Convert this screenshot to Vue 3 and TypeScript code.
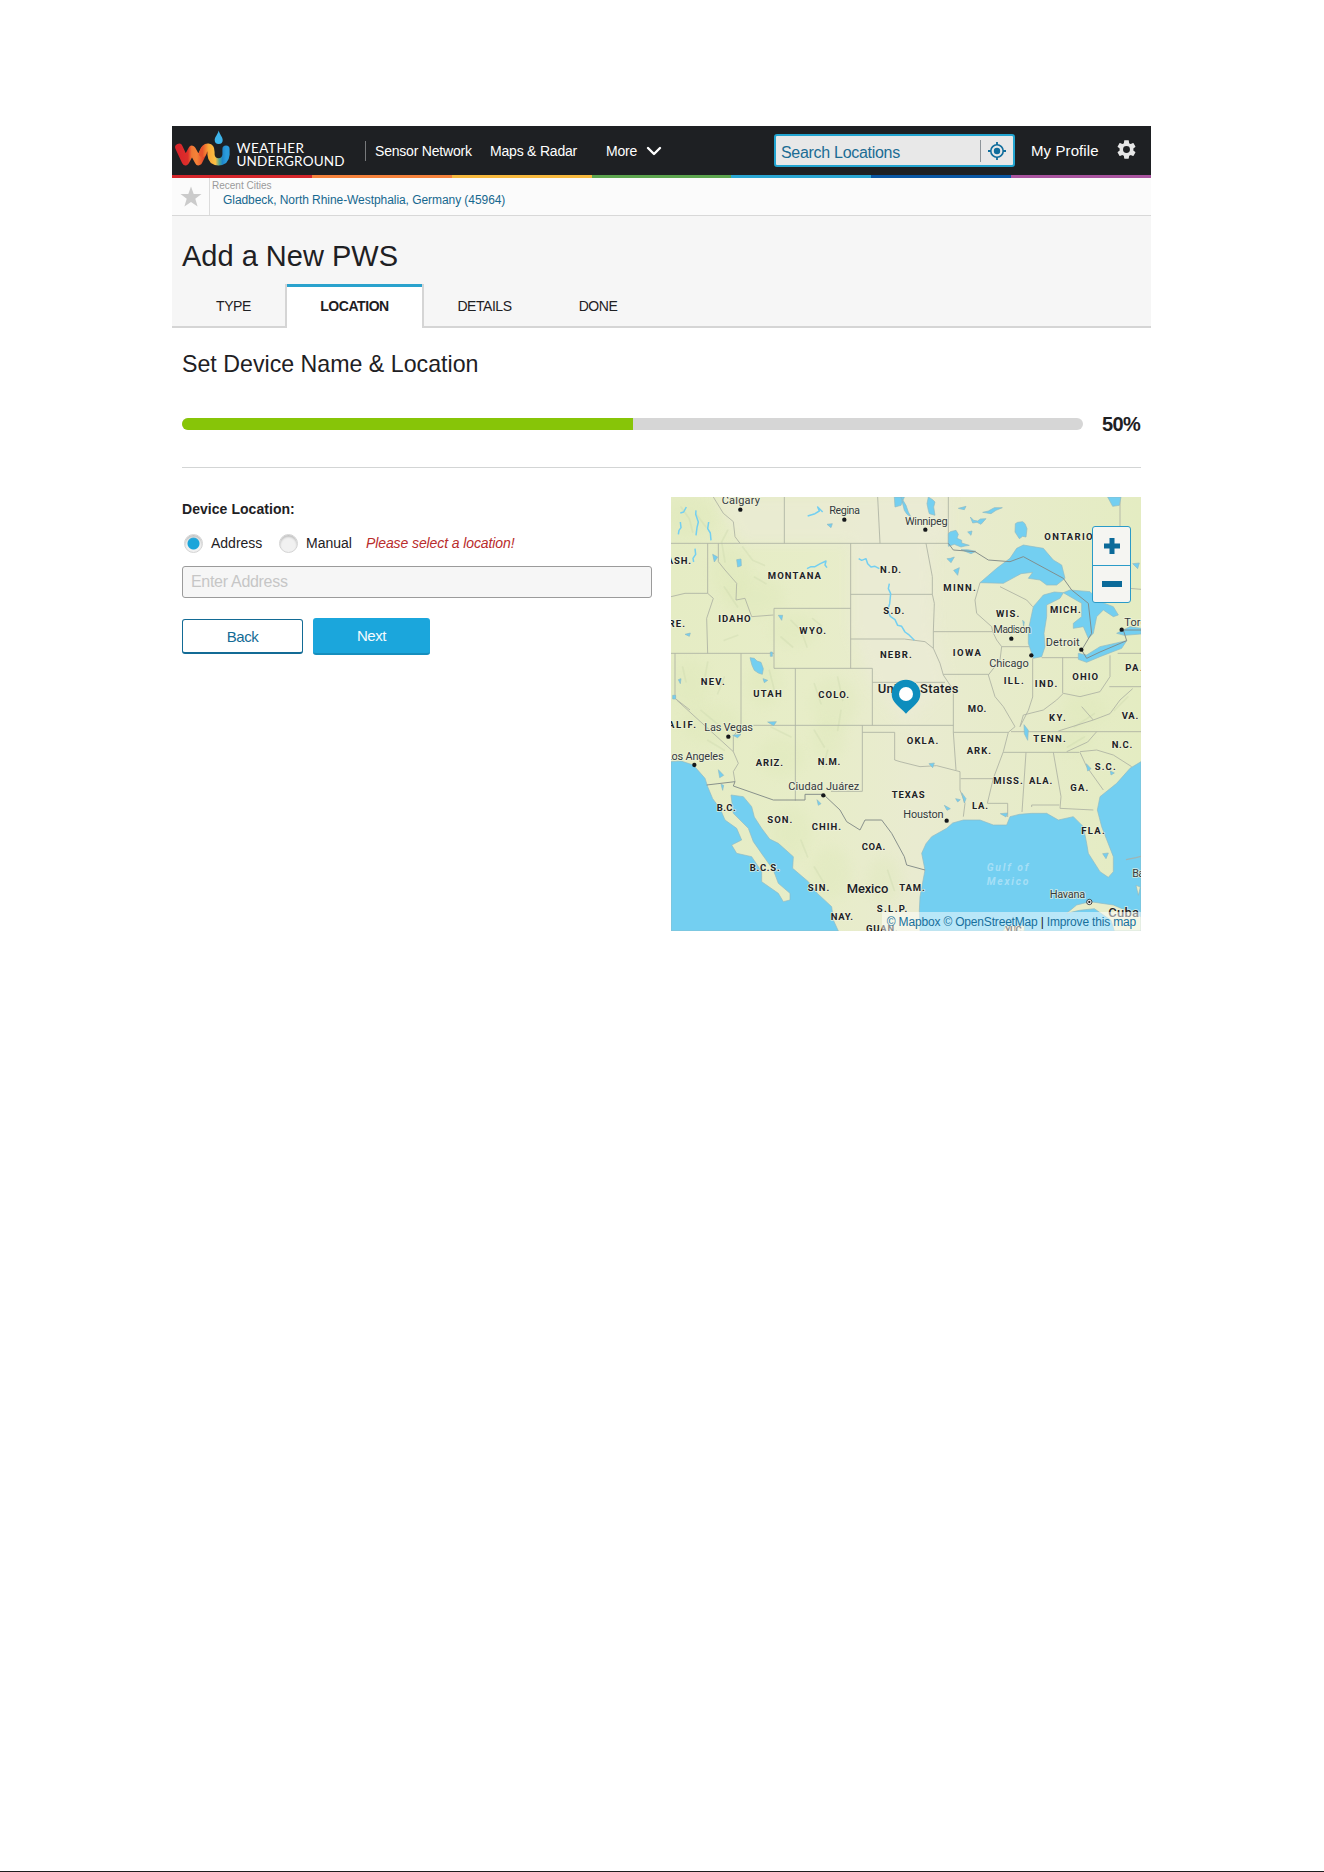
<script setup lang="ts">
import { ref } from 'vue'

interface MapLabel {
  text: string
  x: number
  y: number
  w: number
  kind?: 'city' | 'country' | 'sea'
}

const progress = 50
const mode = ref<'address' | 'manual'>('address')
const address = ref('')
const search = ref('')

const tabs = [
  { id: 'type', label: 'TYPE' },
  { id: 'location', label: 'LOCATION' },
  { id: 'details', label: 'DETAILS' },
  { id: 'done', label: 'DONE' },
]

const stripes = ['#d5262c', '#f5823c', '#f7b93e', '#5da54f', '#2aa6d2', '#0a57a4', '#a9549f']

// Map units: three per screen pixel
const labels: MapLabel[] = [
  { text: 'ASH.', x: -13, y: 200, w: 73 },
  { text: 'MONTANA', x: 290, y: 246, w: 160 },
  { text: 'IDAHO', x: 142, y: 374, w: 97 },
  { text: 'ORE.', x: -31, y: 389, w: 73 },
  { text: 'WYO.', x: 385, y: 411, w: 80 },
  { text: 'N.D.', x: 627, y: 227, w: 63 },
  { text: 'S.D.', x: 637, y: 350, w: 63 },
  { text: 'NEBR.', x: 627, y: 484, w: 95 },
  { text: 'NEV.', x: 89, y: 563, w: 72 },
  { text: 'UTAH', x: 247, y: 601, w: 85 },
  { text: 'COLO.', x: 442, y: 603, w: 92 },
  { text: 'ONTARIO', x: 1120, y: 129, w: 145 },
  { text: 'MINN.', x: 817, y: 282, w: 97 },
  { text: 'WIS.', x: 975, y: 359, w: 70 },
  { text: 'MICH.', x: 1137, y: 348, w: 92 },
  { text: 'IOWA', x: 845, y: 476, w: 85 },
  { text: 'ILL.', x: 998, y: 561, w: 60 },
  { text: 'IND.', x: 1091, y: 571, w: 68 },
  { text: 'OHIO', x: 1204, y: 549, w: 77 },
  { text: 'PA.', x: 1363, y: 521, w: 52 },
  { text: 'MO.', x: 890, y: 644, w: 56 },
  { text: 'KY.', x: 1134, y: 671, w: 50 },
  { text: 'VA.', x: 1352, y: 665, w: 50 },
  { text: 'TENN.', x: 1087, y: 735, w: 97 },
  { text: 'N.C.', x: 1322, y: 753, w: 62 },
  { text: 'OKLA.', x: 707, y: 740, w: 95 },
  { text: 'ARK.', x: 887, y: 772, w: 73 },
  { text: 'S.C.', x: 1271, y: 819, w: 63 },
  { text: 'MISS.', x: 967, y: 862, w: 88 },
  { text: 'ALA.', x: 1074, y: 862, w: 70 },
  { text: 'GA.', x: 1198, y: 882, w: 54 },
  { text: 'TEXAS', x: 662, y: 902, w: 99 },
  { text: 'LA.', x: 903, y: 936, w: 48 },
  { text: 'FLA.', x: 1231, y: 1011, w: 70 },
  { text: 'CALIF.', x: -33, y: 692, w: 108 },
  { text: 'ARIZ.', x: 254, y: 807, w: 82 },
  { text: 'N.M.', x: 440, y: 803, w: 68 },
  { text: 'B.C.', x: 137, y: 941, w: 57 },
  { text: 'SON.', x: 289, y: 979, w: 75 },
  { text: 'CHIH.', x: 422, y: 999, w: 88 },
  { text: 'COA.', x: 572, y: 1058, w: 71 },
  { text: 'B.C.S.', x: 236, y: 1121, w: 90 },
  { text: 'SIN.', x: 410, y: 1181, w: 65 },
  { text: 'TAM.', x: 685, y: 1181, w: 76 },
  { text: 'NAY.', x: 479, y: 1269, w: 67 },
  { text: 'S.L.P.', x: 617, y: 1246, w: 92 },
  { text: 'GUAN.', x: 585, y: 1305, w: 95 },
  { text: 'YUC.', x: 1002, y: 1308, w: 57 },
  { text: 'Calgary', x: 152, y: 21, w: 115, kind: 'city' },
  { text: 'Regina', x: 475, y: 52, w: 92, kind: 'city' },
  { text: 'Winnipeg', x: 702, y: 83, w: 128, kind: 'city' },
  { text: 'Madison', x: 967, y: 409, w: 113, kind: 'city' },
  { text: 'Detroit', x: 1124, y: 446, w: 102, kind: 'city' },
  { text: 'Toronto', x: 1360, y: 387, w: 115, kind: 'city' },
  { text: 'Chicago', x: 955, y: 509, w: 118, kind: 'city' },
  { text: 'Las Vegas', x: 100, y: 703, w: 146, kind: 'city' },
  { text: 'Los Angeles', x: -16, y: 789, w: 174, kind: 'city' },
  { text: 'Ciudad Juárez', x: 352, y: 878, w: 213, kind: 'city' },
  { text: 'Houston', x: 697, y: 962, w: 121, kind: 'city' },
  { text: 'Havana', x: 1136, y: 1203, w: 107, kind: 'city' },
  { text: 'Bahamas', x: 1384, y: 1139, w: 120, kind: 'city' },
  { text: 'United States', x: 620, y: 587, w: 242, kind: 'country' },
  { text: 'Mexico', x: 527, y: 1187, w: 125, kind: 'country' },
  { text: 'Cuba', x: 1312, y: 1259, w: 92, kind: 'country' },
  { text: 'Gulf of', x: 947, y: 1121, w: 125, kind: 'sea' },
  { text: 'Mexico', x: 947, y: 1164, w: 125, kind: 'sea' },
]

const cities = [
  [208, 38], [520, 68], [763, 98], [1021, 425], [1081, 475], [1231, 458],
  [1352, 398], [172, 719], [70, 804], [457, 895], [827, 971],
]

const relief = [
  [60, 60, 80, 60], [180, 230, 60, 80], [250, 300, 90, 60], [370, 400, 70, 50],
  [60, 560, 60, 70], [280, 560, 50, 70], [490, 620, 70, 80], [120, 680, 90, 60],
  [330, 780, 70, 60], [470, 730, 50, 60], [360, 1010, 60, 80], [480, 1130, 60, 80],
  [640, 1150, 50, 70], [1240, 640, 70, 50], [1200, 730, 70, 40],
]
</script>

<template>
  <div class="page">
    <div class="site">
      <header class="topbar">
        <svg class="logo" viewBox="0 0 183 49" role="img" aria-label="Weather Underground">
          <defs>
            <linearGradient id="logo-w" x1="0" x2="1">
              <stop offset="0" stop-color="#d9252b" />
              <stop offset="0.35" stop-color="#dd2f2a" />
              <stop offset="0.5" stop-color="#f07a35" />
              <stop offset="0.7" stop-color="#f58238" />
              <stop offset="1" stop-color="#e2402a" />
            </linearGradient>
            <linearGradient id="logo-u" x1="0" x2="1">
              <stop offset="0" stop-color="#e8532c" />
              <stop offset="0.25" stop-color="#f9a636" />
              <stop offset="0.55" stop-color="#fbc044" />
              <stop offset="0.72" stop-color="#4aa79a" />
              <stop offset="0.85" stop-color="#1f86c9" />
              <stop offset="1" stop-color="#2a9bdc" />
            </linearGradient>
          </defs>
          <path d="M7 21.500 13.500 35.500 20 23.500 26.500 35.500 32.500 23.500" fill="none" stroke="url(#logo-w)" stroke-width="7.600" stroke-linecap="round" stroke-linejoin="round" />
          <path d="M30.500 27.500C32 22.500 34 21 36.200 21.200Q39 21.500 39 26V28.500Q39.500 35.500 46.500 35.800Q53.500 35.500 54 28.500V23" fill="none" stroke="url(#logo-u)" stroke-width="7.200" stroke-linecap="round" />
          <path d="M46.700 4.500C47.700 8.500 50.700 11 50.700 14A4 4 0 0 1 42.700 14C42.700 11 45.700 8.500 46.700 4.500Z" fill="#3db4ea" />
          <text x="64.500" y="26.600" textLength="67.500" class="logo__text">WEATHER</text>
          <text x="64.500" y="39.600" textLength="108" class="logo__text">UNDERGROUND</text>
        </svg>
        <nav class="nav">
          <a class="nav__link">Sensor Network</a>
          <a class="nav__link">Maps &amp; Radar</a>
          <a class="nav__link nav__link--more">
            More
            <svg width="16" height="10" viewBox="0 0 16 10"><path d="M2 2 8 8 14 2" fill="none" stroke="#fff" stroke-width="2.400" stroke-linecap="round" stroke-linejoin="round" /></svg>
          </a>
        </nav>
        <div class="search">
          <input v-model="search" class="search__input" placeholder="Search Locations" aria-label="Search Locations">
          <span class="search__locate">
            <svg width="20" height="20" viewBox="0 0 20 20">
              <circle cx="10" cy="10" r="6.200" fill="none" stroke="#0f6d9c" stroke-width="1.600" />
              <circle cx="10" cy="10" r="3.200" fill="#0f6d9c" />
              <path d="M10 1V4M10 16V19M1 10H4M16 10H19" stroke="#0f6d9c" stroke-width="1.800" />
            </svg>
          </span>
        </div>
        <a class="profile">My Profile</a>
        <svg class="gear" width="23" height="23" viewBox="0 0 24 24">
          <path fill="#e6e6e6" d="M19.140 12.940c.04-.3.060-.61.060-.94 0-.32-.02-.64-.07-.94l2.030-1.580c.18-.14.230-.41.120-.61l-1.920-3.320c-.12-.22-.37-.29-.59-.22l-2.390.96c-.5-.38-1.030-.7-1.620-.94L14.400 2.810c-.04-.24-.24-.41-.48-.41h-3.840c-.24 0-.43.17-.47.41L9.250 5.350C8.660 5.590 8.120 5.920 7.630 6.290L5.240 5.330c-.22-.08-.47 0-.59.22L2.740 8.870c-.12.21-.08.47.12.61l2.030 1.580c-.05.3-.09.63-.09.94s.02.640.07.940l-2.030 1.580c-.18.14-.23.41-.12.61l1.920 3.320c.12.220.37.290.59.220l2.390-.96c.5.380 1.030.700 1.620.940l.36 2.540c.05.240.240.410.480.410h3.840c.24 0 .440-.17.470-.41l.36-2.540c.59-.24 1.130-.56 1.620-.94l2.390.96c.22.080.470 0 .590-.22l1.920-3.320c.12-.22.070-.47-.12-.61l-2.010-1.580zM12 15.600A3.600 3.600 0 1 1 12 8.400a3.600 3.600 0 0 1 0 7.200z" />
        </svg>
      </header>
      <div class="stripes">
        <i v-for="color in stripes" :key="color" :style="{ background: color }" />
      </div>

      <div class="recent">
        <div class="recent__star">
          <svg width="22" height="22" viewBox="0 0 22 22"><path fill="#cbcbcb" d="M11 .500 13.700 8H21.500L15.300 12.700 17.600 20.500 11 15.900 4.400 20.500 6.700 12.700.500 8H8.300Z" /></svg>
        </div>
        <div class="recent__body">
          <span class="recent__title">Recent Cities</span>
          <a class="recent__city">Gladbeck, North Rhine-Westphalia, Germany (45964)</a>
        </div>
      </div>

      <section class="heading">
        <h1>Add a New PWS</h1>
        <div class="tabs" role="tablist">
          <span
            v-for="tab in tabs"
            :key="tab.id"
            class="tab"
            :class="[`tab--${tab.id}`, { 'tab--active': tab.id === 'location' }]"
            role="tab"
          >{{ tab.label }}</span>
        </div>
      </section>

      <main class="content">
        <h2>Set Device Name &amp; Location</h2>
        <div class="progress">
          <div class="progress__track">
            <div class="progress__fill" :style="{ width: `${progress}%` }" />
          </div>
          <strong>{{ progress }}%</strong>
        </div>
        <hr>

        <div class="columns">
          <form class="form" @submit.prevent>
            <strong class="form__label">Device Location:</strong>
            <div class="form__modes">
              <label class="radio">
                <input v-model="mode" type="radio" value="address"><span>Address</span>
              </label>
              <label class="radio">
                <input v-model="mode" type="radio" value="manual"><span>Manual</span>
              </label>
              <em>Please select a location!</em>
            </div>
            <input v-model="address" class="form__address" placeholder="Enter Address">
            <div class="form__actions">
              <button class="btn btn--back" type="button">Back</button>
              <button class="btn btn--next" type="button">Next</button>
            </div>
          </form>

          <div class="map">
            <svg class="map__canvas" viewBox="0 0 1410 1302">
              <defs>
                <linearGradient id="land" x1="0" x2="1">
                  <stop offset="0" stop-color="#e5ecc4" />
                  <stop offset="0.3" stop-color="#e7edc8" />
                  <stop offset="0.52" stop-color="#e9ebd0" />
                  <stop offset="1" stop-color="#e4ecc2" />
                </linearGradient>
                <filter id="soft" x="-40%" y="-40%" width="180%" height="180%"><feGaussianBlur stdDeviation="18" /></filter>
              </defs>
              <rect width="1410" height="1302" fill="url(#land)" />
              <path d="M130 0H832V139H210ZM540 139H780L790 400 830 560 700 680 600 560 540 400Z" fill="#ebebd6" opacity="0.7" filter="url(#soft)" />
              <ellipse v-for="(r, i) in relief" :key="i" :cx="r[0]" :cy="r[1]" :rx="r[2]" :ry="r[3]" fill="#dce7b6" opacity="0.3" filter="url(#soft)" />

              <g class="map__relief">
                <path d="M30 30l25 35 10 40M75 50l30 40M170 100l-18 35 10 60M215 150l30 40 35 15M160 270l40 60M250 240l35 20M360 370l30 30 18 50M330 420l35 30M425 365l25 20-10 30M160 430l40-15M35 510l10 45M110 495l-8 45M140 590l20-50M295 520l15 60M430 560l20 60M500 540l15 70M510 640l-10 60M90 640l60 50M110 730l50 30M300 690l60 30M430 700l30 50M470 760l-14 50M390 1030l20 50M430 1110l30 50M650 1120l20 60M1210 690l60-40M1190 750l50-30M1330 640l40-40" />
              </g>

              <g class="map__borders">
                <path d="M0 139H832M340 0V139M620 0 627 139M832 0V139M127 0 157 49 187 74 192 119 207 139" />
                <path d="M110 139V289L127 304 107 364 110 469M0 299 42 289H110M142 139V194L162 219 197 259 195 309 222 304 242 359 307 354M309 514V334H539M539 139V514M309 514H604M0 469H309" />
                <path d="M12 469V604L57 639M17 609 187 764 202 799 187 824 192 854M210 469V685L187 719V764M373 514V911M247 685H847M539 292H784M539 426H700L762 434 787 454M604 514V685M604 556H822" />
                <path d="M765 139 784 239V292L790 319 787 404V454L807 499 817 534 847 579V706L855 819M787 404H963M817 532H953" />
                <path d="M927 257 912 309 917 349 962 389 965 404 977 429 992 449 987 489 952 534 972 599 997 629 1032 689 1012 706 997 764 967 844 949 919H1010V960" />
                <path d="M992 449H1075M1085 484V600L1072 640 1047 689M1047 689 1057 654 1117 639 1157 609 1177 589 1227 599 1287 584 1317 539V475M1175 482V589M1112 482H1222M1315 569H1410M1340 469H1410M987 269 1067 309 1085 329M1347 0V90M1330 270 1410 277" />
                <path d="M574 685V883H480M574 706H671V789L687 794 747 809 797 806 867 824V879L882 919 877 959M869 845H967M847 706H1012M1020 704H1410M997 766H1225M1065 766 1053 945M1147 766 1170 899 1167 934 1267 939M1082 930V924H1165M1227 766 1247 809 1297 879M1227 764 1277 759 1327 774 1382 809M1277 704 1250 735 1187 764M1162 702 1267 669 1232 629M1267 669 1317 650 1347 609 1385 575" />
              </g>

              <g class="map__water">
                <path d="M0 794 30 792 67 804 102 844 110 869 125 905 147 934 162 969 197 994 212 1029 182 1044 197 1069 242 1079 272 1124V1154L322 1189 337 1214 357 1209V1189L322 1159 307 1119 282 1084 247 1034 232 994 187 949 180 894 217 899 242 929 250 960 272 994 296 1026 322 1039 367 1079 365 1114 412 1154 440 1190 482 1229 487 1269 502 1302H0Z" />
                <path d="M747 1302 745 1240 747 1199 762 1119 752 1069 765 1040 782 1019 827 994 845 978 877 969 927 969 967 984 1007 984 1017 959 1045 952 1082 949 1127 949 1162 969 1207 959 1237 989 1247 1039 1252 1069 1287 1124 1312 1141 1327 1124V1079L1292 989 1279 939 1287 899 1337 859 1377 814 1410 794V1302Z" />
                <path d="M927 257 977 214 1017 184 1037 154 1057 144 1117 154 1147 189 1172 204 1182 244 1157 264 1127 264 1107 249 1072 244 1085 226 1050 230 997 259Z" />
                <path d="M1072 399 1087 329 1117 294 1150 285 1177 287 1167 304 1127 324V359L1119 409 1122 449 1112 479 1087 484 1072 439Z" />
                <path d="M1177 287 1197 279 1257 284 1287 314 1327 329 1342 354 1327 359 1297 339 1277 359 1267 409 1252 424 1237 389 1207 394V379L1232 359V319Z" />
                <path d="M1222 469 1247 474 1287 449 1367 431 1352 454 1287 479 1247 496 1222 487ZM1337 409 1377 389 1410 394V411L1360 415Z" />
                <path d="M832 110 838 104 855 100 862 112 858 124 872 130 872 138 895 145 882 147 870 150 850 142 832 148ZM1033 80 1040 76 1055 74 1062 80 1068 95 1065 120 1055 118 1045 125 1032 105ZM898 60 908 70 920 72 928 66 945 65 930 82 918 76 905 78ZM862 34 885 28 880 38 870 36ZM935 46 952 42 970 32 994 32 975 40 960 50ZM772 0 785 8 792 15 788 30 792 55 775 50 772 40 768 20ZM690 0 705 25 712 45 720 60 708 52 700 40ZM670 0H700L690 25 672 30ZM828 185 838 184 850 180 840 197ZM848 220 865 212 860 235ZM890 105 903 102 900 115ZM1385 200 1405 198 1400 215ZM1310 0H1350L1345 25 1325 28ZM870 158 890 158 915 163 900 170Z" />
                <path d="M237 482 250 484 258 492 270 496 277 515 274 532 262 528 250 520 243 505ZM276 545 290 550 280 557ZM197 188 210 186 211 206 200 210ZM125 172 140 180 130 195ZM322 355 335 355 332 370ZM298 465 304 465V478H298ZM42 412 58 408 55 418ZM468 82 484 80 480 92ZM22 548 30 545 28 560ZM5 595 14 595V606H5ZM290 675 316 674 308 686ZM185 715 210 712 200 722ZM142 818 158 835 146 842ZM150 862 158 865 155 880ZM438 908 450 920 442 925ZM774 800 790 798 785 812ZM1059 683 1072 700 1070 730 1060 710ZM872 887 885 905 880 918ZM820 925 838 935 828 940ZM854 905 868 908 860 915ZM988 950 1010 948 1005 960ZM1246 800 1260 815 1250 822ZM1318 822 1330 828 1320 834ZM1295 1070 1312 1068 1305 1085ZM1055 370 1060 375 1058 388Z" />
                <path class="map__river" d="M46 30 38 45 28 48M28 75 30 92 24 100 22 112M75 40 74 52 82 75 78 92 75 115M113 75 110 95 118 108 120 130M72 155 74 172 66 184 68 195M408 215 420 209 432 209 448 200 465 192 462 204 468 212M410 57 432 50 445 42 440 30 455 45M563 185 572 190 585 185 590 200 600 210 612 208 625 215M655 260 652 275 659 290 656 320 650 340 658 358 672 368 680 385 692 388 702 405 712 412 730 430" />
              </g>
              <path d="M1187 1249 1217 1224 1257 1214 1327 1224 1410 1259V1302H1330L1320 1270 1270 1235 1225 1240ZM995 1302 1005 1290 1060 1284V1302ZM1395 1165 1408 1170 1402 1195Z" class="map__island" />
              <path class="map__coast" d="M1365 1088 1395 1082 1410 1078" />
              <path class="map__frontier" d="M832 139 847 159 912 164 952 189 1017 194 1057 179 1177 244 1202 279 1252 319 1262 409 1232 459 1247 484 1287 465 1367 431 1357 399H1410M107 864 192 854 187 867 307 909H402V892H457L507 939 527 974 567 999 582 969H632L662 1009 700 1079 707 1104 762 1119" />

              <g>
                <circle v-for="(c, i) in cities" :key="i" :cx="c[0]" :cy="c[1]" r="6.500" fill="#15171a" />
                <circle cx="1255" cy="1215" r="8" fill="#fff" stroke="#222" stroke-width="2.500" />
                <circle cx="1255" cy="1215" r="3.500" fill="#222" />
              </g>
              <text
                v-for="(l, i) in labels"
                :key="i"
                :x="l.x"
                :y="l.y"
                :textLength="l.w"
                class="map__label"
                :class="l.kind ? `map__label--${l.kind}` : 'map__label--state'"
              >{{ l.text }}</text>

              <path fill="#0d8dbd" d="M705 548A43 43 0 0 1 748 591C748 617 725 628 705 650 685 628 662 617 662 591A43 43 0 0 1 705 548Z" />
              <circle cx="705" cy="591" r="21" fill="#fff" />
            </svg>
            <div class="zoom">
              <button type="button" aria-label="Zoom in"><svg width="16" height="16" viewBox="0 0 16 16"><path d="M8 0V16M0 8H16" stroke="#0b6a99" stroke-width="5" /></svg></button>
              <button type="button" aria-label="Zoom out"><svg width="20" height="16" viewBox="0 0 20 16"><path d="M0 8H20" stroke="#0b6a99" stroke-width="6" /></svg></button>
            </div>
            <div class="credit"><a>© Mapbox</a> <a>© OpenStreetMap</a> | <a>Improve this map</a></div>
          </div>
        </div>
      </main>
    </div>
  </div>
</template>

<style>
body {
  margin: 0;
  background: #fff;
}
</style>

<style scoped>
* {
  box-sizing: border-box;
}

.page {
  display: flex;
  justify-content: center;
  align-items: flex-start;
  width: 1324px;
  height: 1872px;
  padding: 126px 1px 0 0;
  border-bottom: 1px solid #1e1e1e;
  color: #1e2023;
  font-family: 'Liberation Sans', Arial, sans-serif;
  font-size: 14px;
}

.site {
  width: 979px;
}

.topbar {
  display: flex;
  align-items: center;
  height: 49px;
  background: #1e2023;
  color: #fff;
}

.logo {
  flex: none;
  width: 183px;
  height: 49px;
}

.logo__text {
  fill: #fff;
  font-family: Lato, sans-serif;
  font-size: 13.5px;
}

.nav {
  display: flex;
  align-items: center;
  height: 20px;
  margin-left: 10px;
  padding-left: 9px;
  border-left: 1px solid #77797b;
}

.nav__link {
  width: 115px;
  letter-spacing: -0.2px;
  white-space: nowrap;
}

.nav__link--more {
  display: flex;
  align-items: center;
  gap: 9px;
  width: 168px;
  padding-left: 1px;
}

.search {
  display: flex;
  align-items: center;
  width: 241px;
  height: 33px;
  margin-left: 1px;
  border: 2px solid #22a4d0;
  border-radius: 3px;
  background: #e8e8e8;
}

.search__input {
  flex: 1;
  min-width: 0;
  padding: 4px 0 0 5px;
  border: 0;
  background: none;
  font: 16px 'Liberation Sans', Arial, sans-serif;
  letter-spacing: -0.3px;
}

.search__input::placeholder {
  color: #1b6c94;
}

.search__locate {
  display: grid;
  width: 33px;
  height: 22px;
  place-items: center;
  border-left: 1px solid #8d9499;
}

.profile {
  width: 86px;
  margin-left: 16px;
  font-size: 15px;
  letter-spacing: 0.1px;
}

.gear {
  margin: -2px 0 0 -2px;
}

.stripes {
  display: flex;
  height: 3px;
}

.stripes i {
  flex: 1;
}

.recent {
  display: flex;
  height: 38px;
  border-bottom: 1px solid #d8d8d8;
  background: #fbfbfb;
}

.recent__star {
  display: grid;
  width: 38px;
  place-items: center;
  border-right: 1px solid #dcdcdc;
}

.recent__body {
  display: flex;
  flex-direction: column;
  padding: 1px 0 0 2px;
}

.recent__title {
  color: #9a9a9a;
  font-size: 10px;
  line-height: 14px;
}

.recent__city {
  margin-left: 11px;
  color: #17688f;
  font-size: 12px;
  letter-spacing: -0.06px;
  line-height: 15px;
}

.heading {
  height: 112px;
  padding-top: 22px;
  background: #f6f6f6;
}

h1 {
  margin: 0 0 10px 10px;
  font-size: 29px;
  font-weight: 400;
  line-height: 36px;
}

.tabs {
  display: flex;
  height: 44px;
  border-bottom: 2px solid #d5d5d5;
}

.tab {
  height: 44px;
  font-size: 14px;
  letter-spacing: -0.45px;
  line-height: 44px;
  text-align: center;
}

.tab--type {
  width: 113px;
  padding-left: 10px;
}

.tab--location {
  width: 139px;
}

.tab--details {
  width: 121px;
}

.tab--done {
  width: 106px;
}

.tab--active {
  border: solid #d5d5d5;
  border-width: 0 2px;
  background: linear-gradient(#2aa2cd 3px, #fff 3px);
  font-weight: 700;
}

.content {
  padding: 22px 10px 0;
}

h2 {
  margin: 0;
  font-size: 23.2px;
  font-weight: 400;
  line-height: 28px;
}

.progress {
  display: flex;
  align-items: center;
  height: 24px;
  margin-top: 34px;
}

.progress__track {
  width: 901px;
  height: 12px;
  overflow: hidden;
  border-radius: 6px;
  background: #d6d6d6;
}

.progress__fill {
  height: 100%;
  background: #87c508;
}

.progress strong {
  margin-left: 19px;
  font-size: 20px;
  letter-spacing: -0.6px;
}

hr {
  height: 1px;
  margin: 31px 0 29px;
  border: 0;
  background: #d3d5d5;
}

.columns {
  display: grid;
  grid-template-columns: 470px 470px;
  gap: 19px;
}

.form {
  padding-top: 2px;
}

.form__label {
  display: block;
  letter-spacing: 0.05px;
  line-height: 20px;
}

.form__modes {
  display: flex;
  align-items: center;
  height: 20px;
  margin: 14px 0 13px 2px;
}

.radio {
  display: flex;
  align-items: center;
  width: 95px;
}

.radio span {
  margin-top: -1px;
}

.radio + .radio {
  width: 87px;
}

.radio input {
  flex: none;
  width: 19px;
  height: 19px;
  margin: 1px 8px 0 0;
  border: 1px solid #d4d4d4;
  border-radius: 50%;
  appearance: none;
  background: #f1f1f1;
  box-shadow: inset 0 2px 2px #c3c3c3;
}

.radio input:checked {
  background: radial-gradient(circle, #1ba5da 5.5px, #f1f1f1 6.5px);
}

.form__modes em {
  margin-top: -1px;
  color: #b92c2c;
  letter-spacing: -0.1px;
}

.form__address {
  display: block;
  width: 100%;
  height: 32px;
  padding: 0 8px;
  border: 1px solid #9b9b9b;
  border-radius: 3px;
  background: #f6f6f6;
  font: 16px 'Liberation Sans', Arial, sans-serif;
  letter-spacing: -0.3px;
}

.form__address::placeholder {
  color: #c6c6c6;
}

.form__actions {
  display: flex;
  align-items: center;
  gap: 10px;
  height: 37px;
  margin-top: 20px;
}

.btn {
  padding: 0;
  border-radius: 3px;
  font: 15px 'Liberation Sans', Arial, sans-serif;
  letter-spacing: -0.4px;
}

.btn--back {
  width: 121px;
  height: 35px;
  border: 1px solid #136b95;
  border-bottom-width: 2px;
  background: #fff;
  color: #136b95;
}

.btn--next {
  width: 117px;
  height: 37px;
  border: 0;
  border-bottom: 2px solid #168ebd;
  background: #1ba6dc;
  color: #f4fbff;
}

.map {
  position: relative;
  height: 434px;
  overflow: hidden;
}

.map__canvas {
  display: block;
  width: 470px;
  height: 434px;
}

.map__borders {
  fill: none;
  stroke: #aeb2a4;
  stroke-width: 2.6;
}

.map__frontier {
  fill: none;
  stroke: #818a87;
  stroke-width: 2.8;
}

.map__relief {
  fill: none;
  stroke: #ced9ae;
  stroke-width: 5;
  stroke-linecap: round;
  stroke-linejoin: round;
  opacity: 0.4;
}

.map__water {
  fill: #73cff1;
  stroke: #8fbac2;
  stroke-width: 2;
  stroke-linejoin: round;
}

.map__river {
  fill: none;
  stroke: #73cff1;
  stroke-width: 4.5;
}

.map__island {
  fill: #e8edca;
  stroke: #8fbac2;
  stroke-width: 2;
}

.map__coast {
  fill: none;
  stroke: #9fb5b5;
  stroke-width: 4;
}

.map__label {
  paint-order: stroke;
  fill: #1d2226;
  stroke: rgba(240, 243, 222, 0.75);
  stroke-width: 5px;
  font-family: Roboto, sans-serif;
}

.map__label--state {
  font-size: 28.5px;
  font-weight: 700;
}

.map__label--city {
  font-size: 33px;
  fill: #34393d;
}

.map__label--country {
  font-size: 39px;
  font-weight: 500;
}

.map__label--sea {
  fill: #a6dff6;
  stroke: none;
  font-size: 31px;
  font-style: italic;
  font-weight: 700;
}

.zoom {
  position: absolute;
  top: 29px;
  right: 10px;
  display: grid;
  width: 39px;
  height: 77px;
  grid-template-rows: 1fr 1fr;
  border: 1px solid #2a9bc8;
  border-radius: 3px;
  background: #f5f5f2;
}

.zoom button {
  display: grid;
  padding: 0;
  place-items: center;
  border: 0;
  background: none;
}

.zoom button + button {
  border-top: 1px solid #2a9bc8;
}

.credit {
  position: absolute;
  right: 0;
  bottom: 0;
  height: 19px;
  padding: 1px 5px 0;
  background: rgba(255, 255, 255, 0.5);
  font-size: 12px;
  letter-spacing: -0.18px;
  line-height: 19px;
  white-space: nowrap;
}

.credit a {
  color: #17709d;
}
</style>
